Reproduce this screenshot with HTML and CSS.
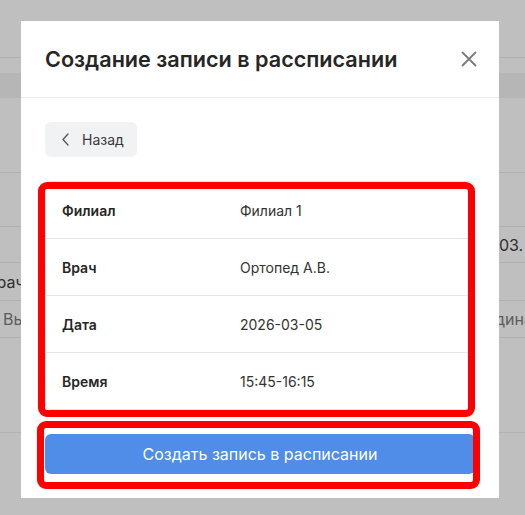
FILE: index.html
```html
<!DOCTYPE html>
<html lang="ru">
<head>
<meta charset="utf-8">
<title>Создание записи в расписании</title>
<link rel="stylesheet" href="styles.css">
</head>
<body>
<div class="page">
  <div class="bg-row r1"></div>
  <div class="bg-gap"></div>
  <div class="bg-band"></div>
  <div class="bg-row r2"></div>
  <div class="bg-row r3"></div>
  <div class="bg-row r4"><span class="bg-left"></span><span class="bg-right dark">03.</span></div>
  <div class="bg-row r5"><span class="bg-left"><span class="bg-cut dark">Врач</span></span><span class="bg-right"></span></div>
  <div class="bg-row r6"><span class="bg-left"><span class="bg-in muted">Вы</span></span><span class="bg-right muted"><span class="bg-cut2">дина</span></span></div>
  <div class="bg-row r7"></div>
</div>

<div class="modal">
  <div class="modal-header">
    <h2 class="modal-title">Создание записи в рассписании</h2>
    <button class="close" aria-label="Закрыть">
      <svg width="16" height="16" viewBox="0 0 16 16"><path d="M1.5 1.5 L14.5 14.5 M14.5 1.5 L1.5 14.5" stroke="#7a7a7a" stroke-width="1.8" stroke-linecap="round" fill="none"/></svg>
    </button>
  </div>
  <div class="modal-body">
    <button class="back">
      <svg width="7" height="13" viewBox="0 0 7 13"><path d="M6 1 L1 6.5 L6 12" stroke="#555" stroke-width="1.3" fill="none" stroke-linecap="round" stroke-linejoin="round"/></svg>
      <span>Назад</span>
    </button>
    <div class="card">
      <div class="row"><div class="label">Филиал</div><div class="value">Филиал 1</div></div>
      <div class="row"><div class="label">Врач</div><div class="value">Ортопед А.В.</div></div>
      <div class="row"><div class="label">Дата</div><div class="value">2026-03-05</div></div>
      <div class="row"><div class="label">Время</div><div class="value">15:45-16:15</div></div>
    </div>
    <button class="primary">Создать запись в расписании</button>
  </div>
</div>

<div class="mark mark-table"></div>
<div class="mark mark-btn"></div>
</body>
</html>
```

FILE: styles.css
```css
* { box-sizing: border-box; }
html, body { margin: 0; padding: 0; }
body {
  width: 525px;
  height: 515px;
  overflow: hidden;
  background: #bfbfbf;
  font-family: Inter, "Noto Sans", sans-serif;
  position: relative;
}

/* dimmed background page */
.page { width: 525px; }
.bg-row {
  border-bottom: 1px solid #b2b2b2;
  display: flex;
  align-items: center;
  font-size: 16px;
  white-space: nowrap;
  overflow: hidden;
}
.r1 { height: 58px; }
.bg-gap { height: 15px; }
.bg-band { height: 25px; background: #b6b6b6; }
.r2 { height: 75px; }
.r3 { height: 54px; }
.r4 { height: 36px; }
.r5 { height: 38px; }
.r6 { height: 37px; }
.r7 { height: 95px; }
.bg-left { width: 499px; flex: none; overflow: hidden; }
.bg-right { flex: none; }
.bg-cut { display: inline-block; margin-left: -14px; }
.bg-cut2 { display: inline-block; margin-left: -4px; }
.bg-in { display: inline-block; margin-left: 3px; }
.dark { color: #2e2e2e; }
.muted { color: #5c5c5c; }

/* modal */
.modal {
  position: absolute;
  left: 21px;
  top: 21px;
  width: 478px;
  height: 477px;
  background: #fff;
  display: flex;
  flex-direction: column;
}
.modal-header {
  height: 77px;
  border-bottom: 1px solid #ededed;
  display: flex;
  align-items: center;
  justify-content: space-between;
  padding: 0 22px 0 24px;
}
.modal-title {
  margin: 0;
  font-size: 21.6px;
  font-weight: 600;
  color: #262626;
}
.close {
  border: 0;
  background: none;
  padding: 0;
  width: 16px;
  height: 16px;
  display: flex;
}
.modal-body {
  padding: 24px;
  display: flex;
  flex-direction: column;
}
.back {
  align-self: flex-start;
  height: 35px;
  width: 92px;
  border: 0;
  border-radius: 6px;
  background: #f1f2f4;
  display: flex;
  align-items: center;
  gap: 13px;
  padding: 0 0 0 17px;
  font-family: inherit;
  font-size: 14px;
  color: #3a3a3a;
}
.card {
  margin-top: 24px;
  border: 1px solid #e6e6e6;
  border-radius: 6px;
}
.row {
  height: 57px;
  display: grid;
  grid-template-columns: 178px 1fr;
  align-items: center;
  padding: 0 16px;
  border-bottom: 1px solid #e6e6e6;
  font-size: 14px;
}
.row:last-child { height: 56px; border-bottom: 0; }
.label { font-weight: 600; color: #262626; }
.value { color: #333; }
.primary {
  margin-top: 24px;
  height: 40px;
  border: 0;
  border-radius: 6px;
  background: #4f8de9;
  color: #fff;
  font-family: inherit;
  font-size: 16px;
}

/* red annotation frames */
.mark {
  position: absolute;
  border: 7px solid #ff0000;
  border-radius: 9px;
}
.mark-table { left: 38px; top: 182px; width: 437px; height: 235px; }
.mark-btn { left: 37px; top: 421px; width: 443px; height: 68px; }
```
